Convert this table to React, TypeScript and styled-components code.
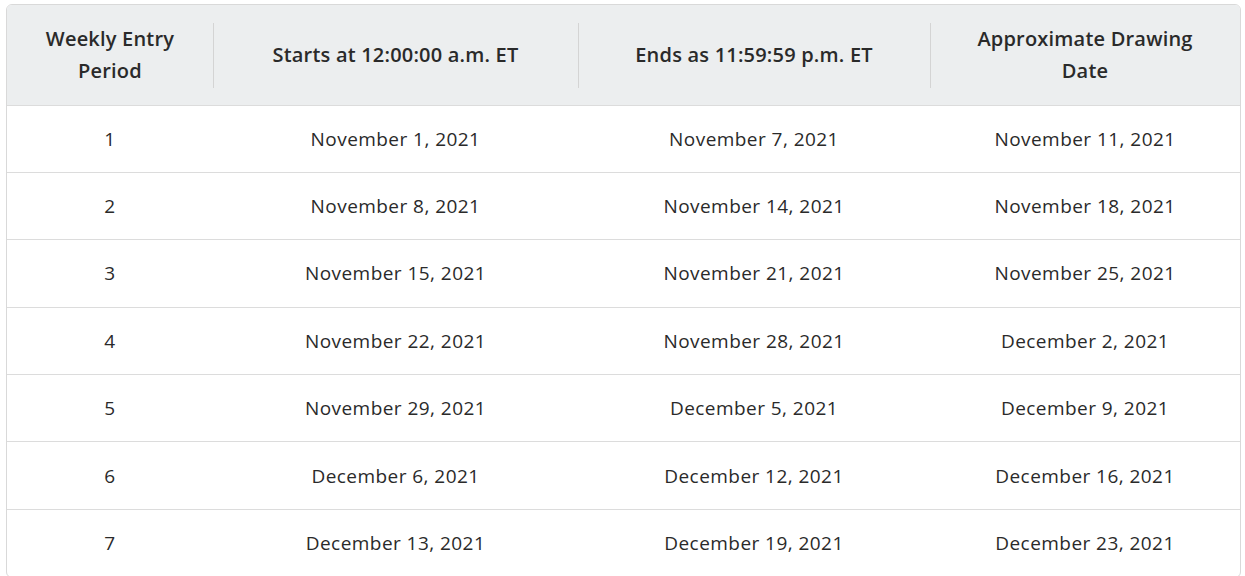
import React from "react";
import styled, { createGlobalStyle } from "styled-components";

const Global = createGlobalStyle`
  html, body { margin: 0; padding: 0; background: #ffffff; }
  body { font-family: "Open Sans", "Noto Sans", sans-serif; color: #212529; }
`;

const Page = styled.div`
  padding: 4px 4px 0 6px;
`;

const Frame = styled.div`
  border: 1px solid #d9d9d9;
  border-radius: 6px;
  overflow: hidden;
`;

const Table = styled.table`
  width: 100%;
  border-collapse: collapse;
  table-layout: fixed;
`;

const HeadRow = styled.tr`
  background: #eceeef;
  height: 100px;
  border-bottom: 1px solid #dcdcdc;
`;

const Th = styled.th<{ $sep?: boolean }>`
  position: relative;
  padding: 0 32px;
  font-size: 20px;
  font-weight: 600;
  letter-spacing: 0.2px;
  line-height: 32px;
  color: #2a2a2a;
  text-align: center;
  vertical-align: middle;
  &::before {
    content: "";
    display: ${(p) => (p.$sep ? "block" : "none")};
    position: absolute;
    left: 0;
    top: 18px;
    bottom: 17px;
    width: 1px;
    background: #d4d4d4;
  }
`;

const Row = styled.tr`
  height: 67.4px;
  border-bottom: 1px solid #dcdcdc;
  &:last-child { border-bottom: none; }
`;

const Td = styled.td`
  font-size: 19px;
  letter-spacing: 0.45px;
  color: #2a2a2a;
  text-align: center;
  vertical-align: middle;
  padding: 0;
`;

const rows = [
  ["1", "November 1, 2021", "November 7, 2021", "November 11, 2021"],
  ["2", "November 8, 2021", "November 14, 2021", "November 18, 2021"],
  ["3", "November 15, 2021", "November 21, 2021", "November 25, 2021"],
  ["4", "November 22, 2021", "November 28, 2021", "December 2, 2021"],
  ["5", "November 29, 2021", "December 5, 2021", "December 9, 2021"],
  ["6", "December 6, 2021", "December 12, 2021", "December 16, 2021"],
  ["7", "December 13, 2021", "December 19, 2021", "December 23, 2021"],
];

export default function App() {
  return (
    <Page>
      <Global />
      <Frame>
        <Table>
          <colgroup>
            <col style={{ width: 206 }} />
            <col style={{ width: 365 }} />
            <col style={{ width: 352 }} />
            <col />
          </colgroup>
          <thead>
            <HeadRow>
              <Th>Weekly Entry Period</Th>
              <Th $sep>Starts at 12:00:00 a.m. ET</Th>
              <Th $sep>Ends as 11:59:59 p.m. ET</Th>
              <Th $sep>Approximate Drawing Date</Th>
            </HeadRow>
          </thead>
          <tbody>
            {rows.map((r) => (
              <Row key={r[0]}>
                {r.map((c, i) => (
                  <Td key={i}>{c}</Td>
                ))}
              </Row>
            ))}
          </tbody>
        </Table>
      </Frame>
    </Page>
  );
}
